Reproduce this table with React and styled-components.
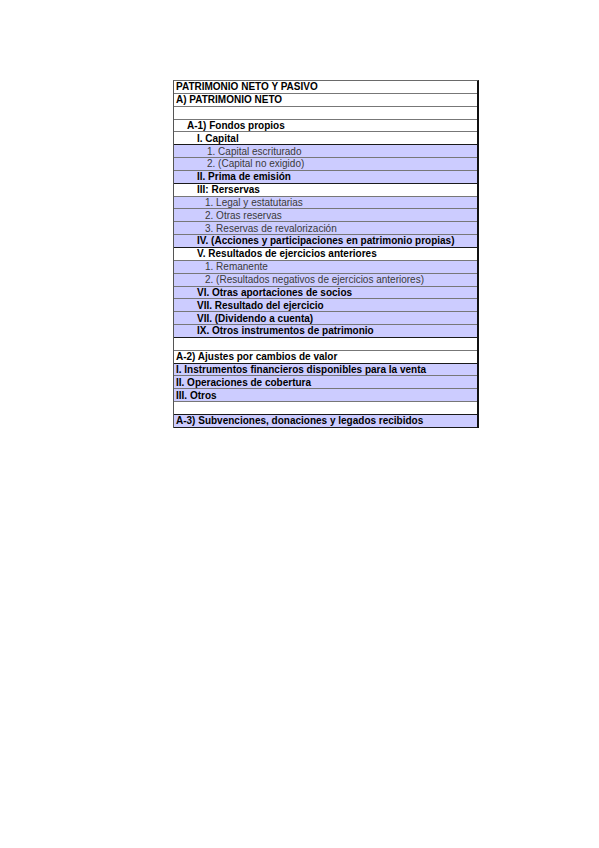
import React from 'react';
import styled, { createGlobalStyle } from 'styled-components';

const GlobalStyle = createGlobalStyle`
  html, body {
    margin: 0;
    padding: 0;
    background: #ffffff;
    font-family: "Liberation Sans", Arial, sans-serif;
  }
`;

const Page = styled.div`
  width: 599px;
  min-height: 848px;
  padding: 80px 0 0 173px;
  box-sizing: border-box;
`;

const Sheet = styled.div`
  width: 306px;
  display: flex;
  flex-direction: column;
  border-top: 1px solid #6a6a6a;
  border-left: 1px solid #555;
  border-right: 2px solid #111;
  box-sizing: border-box;
`;

const Row = styled.div`
  height: 12.85px;
  box-sizing: border-box;
  display: flex;
  align-items: flex-end;
  padding-left: ${({ $indent }) => 2 + $indent}px;
  background: ${({ $fill }) => ($fill ? '#ccccff' : '#ffffff')};
  border-bottom: 1px solid ${({ $dark }) => ($dark ? '#1a1a1a' : '#777777')};
  font-size: 10px;
  line-height: 11.5px;
  font-weight: ${({ $bold }) => ($bold ? 700 : 400)};
  color: ${({ $bold }) => ($bold ? '#000' : '#3a3a3a')};
  white-space: nowrap;
  overflow: hidden;
`;

const rows = [
  { t: 'PATRIMONIO NETO Y PASIVO', b: 1, i: 0 },
  { t: 'A) PATRIMONIO NETO', b: 1, i: 0 },
  { t: '', i: 0 },
  { t: 'A-1) Fondos propios', b: 1, i: 11 },
  { t: 'I. Capital', b: 1, i: 21, d: 1 },
  { t: '1. Capital escriturado', f: 1, i: 31 },
  { t: '2. (Capital no exigido)', f: 1, i: 31 },
  { t: 'II. Prima de emisión', f: 1, b: 1, i: 21, d: 1 },
  { t: 'III: Rerservas', b: 1, i: 21 },
  { t: '1. Legal y estatutarias', f: 1, i: 29 },
  { t: '2. Otras reservas', f: 1, i: 29 },
  { t: '3. Reservas de revalorización', f: 1, i: 29 },
  { t: 'IV. (Acciones y participaciones en patrimonio propias)', f: 1, b: 1, i: 21, d: 1 },
  { t: 'V. Resultados de ejercicios anteriores', b: 1, i: 21 },
  { t: '1. Remanente', f: 1, i: 29 },
  { t: '2. (Resultados negativos de ejercicios anteriores)', f: 1, i: 29 },
  { t: 'VI. Otras aportaciones de socios', f: 1, b: 1, i: 21 },
  { t: 'VII. Resultado del ejercicio', f: 1, b: 1, i: 21 },
  { t: 'VII. (Dividendo a cuenta)', f: 1, b: 1, i: 21 },
  { t: 'IX. Otros instrumentos de patrimonio', f: 1, b: 1, i: 21, d: 1 },
  { t: '', i: 0 },
  { t: 'A-2) Ajustes por cambios de valor', b: 1, i: 0, d: 1 },
  { t: 'I. Instrumentos financieros disponibles para la venta', f: 1, b: 1, i: 0 },
  { t: 'II. Operaciones de cobertura', f: 1, b: 1, i: 0 },
  { t: 'III. Otros', f: 1, b: 1, i: 0 },
  { t: '', i: 0, d: 1 },
  { t: 'A-3) Subvenciones, donaciones y legados recibidos', f: 1, b: 1, i: 0, d: 1 },
];

export default function App() {
  return (
    <>
      <GlobalStyle />
      <Page>
        <Sheet>
          {rows.map((r, k) => (
            <Row key={k} $indent={r.i} $bold={!!r.b} $fill={!!r.f} $dark={!!r.d}>
              {r.t}
            </Row>
          ))}
        </Sheet>
      </Page>
    </>
  );
}
